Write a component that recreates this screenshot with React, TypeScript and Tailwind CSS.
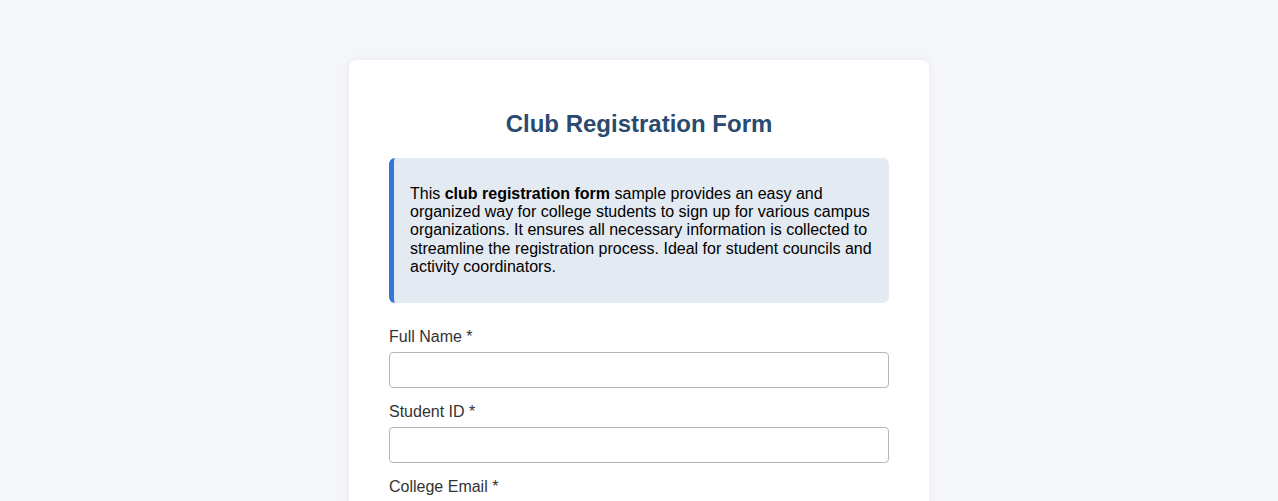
export default function App() {
  const fields = ["Full Name *", "Student ID *", "College Email *", "Phone Number"];
  return (
    <div className="min-h-screen bg-[#f5f6fa] pt-[60px] pb-10 font-['Liberation_Sans',Arial,sans-serif]">
      <div className="mx-auto w-[580px] rounded-lg bg-white px-10 pt-[30px] pb-10 shadow-[0_0_10px_rgba(0,0,0,0.06)]">
        <h2 className="my-5 text-center text-2xl leading-[27.6px] font-bold text-[#2b4a6f]">
          Club Registration Form
        </h2>
        <div className="rounded-md border-l-[5px] border-[#3277d5] bg-[#e4eaf2] px-4 pt-[27px] pb-[26px]">
          <p className="text-base leading-[18.4px] text-black">
            This <strong>club registration form</strong> sample provides an easy and organized way for college students
            to sign up for various campus organizations. It ensures all necessary information is collected to
            streamline the registration process. Ideal for student councils and activity coordinators.
          </p>
        </div>
        <form className="mt-[25px]">
          {fields.map((label) => (
            <div key={label} className="mb-[15px]">
              <label className="mb-[6px] block text-base leading-[18.4px] text-[#333]">{label}</label>
              <input
                type="text"
                className="block h-[36px] w-full rounded border border-[#b5b5b5] bg-white px-2 text-base"
              />
            </div>
          ))}
        </form>
      </div>
    </div>
  );
}
